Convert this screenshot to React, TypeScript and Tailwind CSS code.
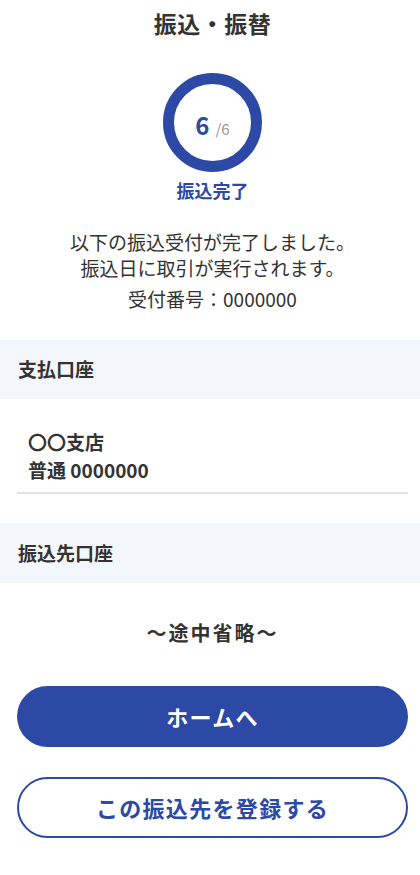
const font = {
  fontFamily: '"Noto Sans CJK JP", "Noto Sans", sans-serif',
};

function ProgressRing() {
  return (
    <div className="flex h-[99px] w-[99px] items-center justify-center rounded-full border-[11px] border-[#2c49a5]">
      <div className="flex items-baseline pt-1">
        <span className="text-[24px] font-bold leading-none text-[#2c49a5]">6</span>
        <span className="ml-[6px] text-[15px] leading-none text-[#999]">/6</span>
      </div>
    </div>
  );
}

function SectionHeader({ label }: { label: string }) {
  return (
    <div className="flex h-[60px] items-center bg-[#f3f6fb] px-[18px]">
      <span className="text-[19px] font-bold text-[#333]">{label}</span>
    </div>
  );
}

export default function App() {
  return (
    <div className="min-h-[875px] w-[420px] bg-white text-[#333]" style={font}>
      {/* Title */}
      <header className="flex h-[46px] items-center justify-center pl-[5px]">
        <h1 className="text-[23px] font-bold tracking-[0.02em] text-[#333]">振込・振替</h1>
      </header>

      {/* Status */}
      <section className="flex flex-col items-center pl-[5px] pt-[27px]">
        <ProgressRing />
        <p className="mt-[6px] text-[18px] font-bold leading-[24px] text-[#2c49a5]">振込完了</p>
        <div className="mt-[27px] text-center text-[19px] leading-[26px]">
          <p>以下の振込受付が完了しました。</p>
          <p>振込日に取引が実行されます。</p>
        </div>
        <p className="mt-[5px] text-[19px] leading-[26px]">受付番号：0000000</p>
      </section>

      {/* Payment account */}
      <div className="mt-[28px]">
        <div className="h-[59px] flex items-center bg-[#f3f6fb] px-[18px]">
          <span className="text-[19px] font-bold text-[#333]">支払口座</span>
        </div>
        <div className="pl-[17px] pr-[12px] pt-[29px]">
          <div className="px-[11px] text-[19px] font-bold leading-[28px]">
            <p>〇〇支店</p>
            <p>普通 0000000</p>
          </div>
          <div className="mt-[8px] h-[2px] bg-[#e3e3e3]" />
        </div>
      </div>

      {/* Destination account */}
      <div className="mt-[29px]">
        <SectionHeader label="振込先口座" />
      </div>

      <p className="mt-[36px] pl-[5px] text-center text-[20px] font-bold leading-[28px] tracking-[0.1em]">
        〜途中省略〜
      </p>

      {/* Actions */}
      <div className="mt-[39px] flex flex-col gap-[30px] pl-[17px] pr-[12px]">
        <button className="h-[61px] w-full rounded-full bg-[#2c49a5] text-[22px] font-bold tracking-[0.06em] text-white">
          ホームへ
        </button>
        <button className="h-[61px] w-full rounded-full border-2 border-[#2c49a5] bg-white text-[22px] font-bold tracking-[0.06em] text-[#2c49a5]">
          この振込先を登録する
        </button>
      </div>
    </div>
  );
}
